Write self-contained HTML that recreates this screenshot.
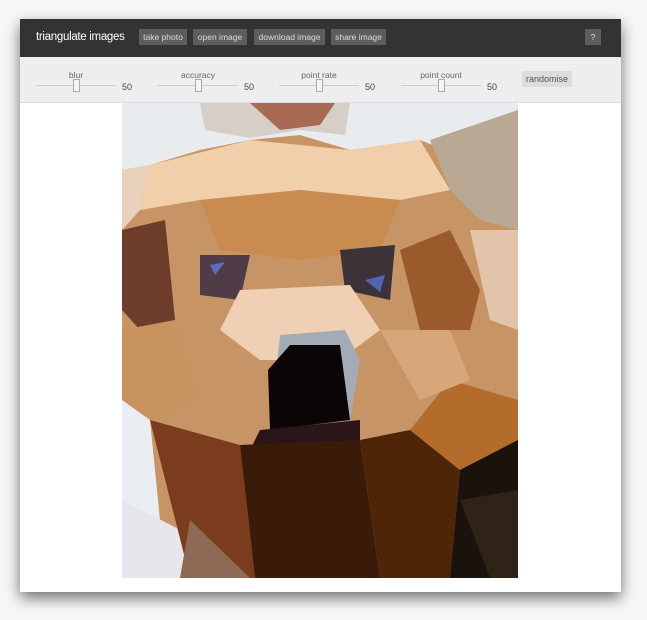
<!DOCTYPE html>
<html><head><style>
body{margin:0;width:647px;height:620px;background:#f7f7f7;font-family:"Liberation Sans",sans-serif;position:relative;overflow:hidden}
#panel{position:absolute;left:20px;top:19px;width:601px;height:573px;background:#fff;box-shadow:0 6px 14px rgba(0,0,0,.55)}
#hdr{position:absolute;left:0;top:0;width:601px;height:38px;background:#333}
#hdr .t{position:absolute;left:16px;top:12px;color:#fff;font-size:11.5px;letter-spacing:-0.3px}
.b{position:absolute;top:10px;height:16px;line-height:16px;background:#5d5d5d;color:#ddd;font-size:8.5px;text-align:center}
#ctl{position:absolute;left:0;top:38px;width:601px;height:45px;background:#eee;border-bottom:1px solid #ddd}
.s{position:absolute;top:0}
.s .l{position:absolute;top:13px;font-size:8.5px;color:#666;width:80px;text-align:center;left:0}
.s .tr{position:absolute;top:28px;left:0;width:80px;height:1px;background:#ccc}
.s .k{position:absolute;top:22px;left:37px;width:5px;height:11px;background:#f4f4f4;border:1px solid #aaa}
.s .v{position:absolute;top:25px;left:86px;font-size:9px;color:#444}
</style></head><body>
<div id="panel">
<div id="hdr"><div class="t">triangulate images</div>
<div class="b" style="left:119px;width:48px">take photo</div>
<div class="b" style="left:173px;width:54px">open image</div>
<div class="b" style="left:234px;width:71px">download image</div>
<div class="b" style="left:311px;width:55px">share image</div>
<div class="b" style="left:565px;width:16px">?</div></div>
<div id="ctl">
<div class="s" style="left:16px"><div class="l">blur</div><div class="tr"></div><div class="k"></div><div class="v">50</div></div>
<div class="s" style="left:138px"><div class="l">accuracy</div><div class="tr"></div><div class="k"></div><div class="v">50</div></div>
<div class="s" style="left:259px"><div class="l">point rate</div><div class="tr"></div><div class="k"></div><div class="v">50</div></div>
<div class="s" style="left:381px"><div class="l">point count</div><div class="tr"></div><div class="k"></div><div class="v">50</div></div>
<div style="position:absolute;left:502px;top:14px;width:50px;height:16px;background:#ddd;color:#555;font-size:9px;text-align:center;line-height:16px">randomise</div>
</div>
</div>
<svg style="position:absolute;left:122px;top:103px" width="396" height="475" viewBox="122 103 396 475">
<rect x="122" y="103" width="396" height="475" fill="#c79466"/>
<polygon points="122,103 518,103 518,180 470,160 420,140 350,150 300,135 250,140 200,150 150,165 122,170" fill="#e9ecef"/>
<polygon points="200,103 350,103 345,135 300,130 250,138 205,130" fill="#d6cfc8"/>
<polygon points="250,103 335,103 320,125 280,130" fill="#a86a52"/>
<polygon points="430,140 518,110 518,230 480,220 450,190" fill="#b8a894"/>
<polygon points="150,165 250,140 350,150 420,140 450,190 400,200 300,190 200,200 140,210" fill="#f0cfaa"/>
<polygon points="122,170 150,165 140,210 122,230" fill="#e9d2bb"/>
<polygon points="200,200 300,190 400,200 380,250 300,260 220,250" fill="#c98b50"/>
<polygon points="122,230 165,220 175,320 140,330 122,310" fill="#6e3c2a"/>
<polygon points="200,255 250,255 240,300 200,295" fill="#4f3c47"/>
<polygon points="340,250 395,245 390,300 345,290" fill="#3b3338"/>
<polygon points="210,265 225,262 215,275" fill="#5b6cb8"/>
<polygon points="365,280 385,275 380,292" fill="#5066b0"/>
<polygon points="240,290 350,285 380,330 340,360 260,360 220,330" fill="#f0d0b5"/>
<polygon points="400,250 450,230 480,290 470,330 420,330" fill="#9b5a2c"/>
<polygon points="470,230 518,230 518,330 490,320" fill="#e2c4aa"/>
<polygon points="122,330 175,320 200,400 150,420 122,410" fill="#c8935f"/>
<polygon points="122,400 150,420 160,520 122,578" fill="#eaeef3"/>
<polygon points="122,500 200,540 250,578 122,578" fill="#e6e6ec"/>
<polygon points="280,335 345,330 360,360 350,420 270,430" fill="#a3acb6"/>
<polygon points="290,345 340,345 350,420 270,430 268,370" fill="#0b0506"/>
<polygon points="260,430 360,420 360,440 250,450" fill="#2a1618"/>
<polygon points="150,420 240,445 255,578 190,578" fill="#7a3c1c"/>
<polygon points="240,445 360,440 380,578 255,578" fill="#3a1a08"/>
<polygon points="360,440 410,430 460,470 450,578 380,578" fill="#4f2508"/>
<polygon points="410,430 450,380 518,400 518,470 460,470" fill="#b46c2c"/>
<polygon points="460,470 518,440 518,578 450,578" fill="#1a120c"/>
<polygon points="460,500 518,490 518,578 490,578" fill="#2f2216"/>
<polygon points="190,520 250,578 180,578" fill="#8e6a54"/>
<polygon points="380,330 450,330 470,380 420,400" fill="#d7a679"/>
</svg>
</body></html>
